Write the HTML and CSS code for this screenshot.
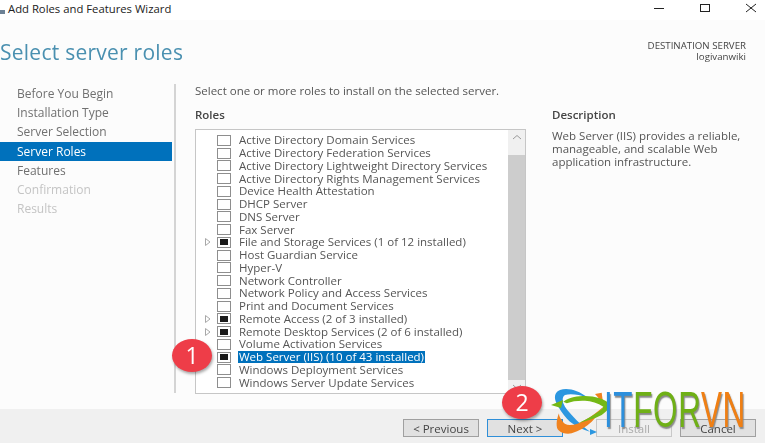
FILE: index.html
```html
<!DOCTYPE html>
<html lang="en">
<head>
    <meta charset="UTF-8">
    <title>Add Roles and Features Wizard</title>
    <link rel="stylesheet" href="styles.css">
</head>
<body>
    <div class="window">
        <div class="titlebar">
            <svg class="app-icon" width="6" height="6" viewBox="0 0 6 6"><rect y="1" width="5" height="4" fill="#6d8296"/></svg>
            <span class="app-name">Add Roles and Features Wizard</span>
            <div class="win-btns">
                <svg width="12" height="16" viewBox="0 0 12 16"><path d="M1 8.500H11" stroke="#222" fill="none"/></svg>
                <svg width="12" height="16" viewBox="0 0 12 16"><rect x="1.500" y="4.500" width="9" height="7" stroke="#222" fill="none"/></svg>
                <svg width="12" height="16" viewBox="0 0 12 16"><path d="M1 4L11 12M11 4L1 12" stroke="#222" fill="none"/></svg>
            </div>
        </div>

        <div class="header">
            <h1 class="page-title">Select server roles</h1>
            <div class="dest">DESTINATION SERVER<br>logivanwiki</div>
        </div>

        <div class="main">
            <ul class="steps">
                <li>Before You Begin</li>
                <li>Installation Type</li>
                <li>Server Selection</li>
                <li class="active">Server Roles</li>
                <li>Features</li>
                <li class="off">Confirmation</li>
                <li class="off">Results</li>
            </ul>

            <div class="content">
                <p class="intro">Select one or more roles to install on the selected server.</p>
                <div class="columns">
                    <div class="roles">
                        <h2 class="label">Roles</h2>
                        <div class="listbox">
                            <ul class="role-list">
                                <li><i class="arrow"></i><i class="check"></i><span>Active Directory Domain Services</span></li>
                                <li><i class="arrow"></i><i class="check"></i><span>Active Directory Federation Services</span></li>
                                <li><i class="arrow"></i><i class="check"></i><span>Active Directory Lightweight Directory Services</span></li>
                                <li><i class="arrow"></i><i class="check"></i><span>Active Directory Rights Management Services</span></li>
                                <li><i class="arrow"></i><i class="check"></i><span>Device Health Attestation</span></li>
                                <li><i class="arrow"></i><i class="check"></i><span>DHCP Server</span></li>
                                <li><i class="arrow"></i><i class="check"></i><span>DNS Server</span></li>
                                <li><i class="arrow"></i><i class="check"></i><span>Fax Server</span></li>
                                <li><i class="arrow"><svg width="6" height="8" viewBox="0 0 6 8"><path d="M0.500 0.500L5 4L0.500 7.500Z" stroke="#a8a8a8" fill="#fff"/></svg></i><i class="check part"></i><span>File and Storage Services (1 of 12 installed)</span></li>
                                <li><i class="arrow"></i><i class="check"></i><span>Host Guardian Service</span></li>
                                <li><i class="arrow"></i><i class="check"></i><span>Hyper-V</span></li>
                                <li><i class="arrow"></i><i class="check"></i><span>Network Controller</span></li>
                                <li><i class="arrow"></i><i class="check"></i><span>Network Policy and Access Services</span></li>
                                <li><i class="arrow"></i><i class="check"></i><span>Print and Document Services</span></li>
                                <li><i class="arrow"><svg width="6" height="8" viewBox="0 0 6 8"><path d="M0.500 0.500L5 4L0.500 7.500Z" stroke="#a8a8a8" fill="#fff"/></svg></i><i class="check part"></i><span>Remote Access (2 of 3 installed)</span></li>
                                <li><i class="arrow"><svg width="6" height="8" viewBox="0 0 6 8"><path d="M0.500 0.500L5 4L0.500 7.500Z" stroke="#a8a8a8" fill="#fff"/></svg></i><i class="check part"></i><span>Remote Desktop Services (2 of 6 installed)</span></li>
                                <li><i class="arrow"></i><i class="check"></i><span>Volume Activation Services</span></li>
                                <li><i class="arrow"></i><i class="check part"></i><span class="selected">Web Server (IIS) (10 of 43 installed)</span></li>
                                <li><i class="arrow"></i><i class="check"></i><span>Windows Deployment Services</span></li>
                                <li><i class="arrow"></i><i class="check"></i><span>Windows Server Update Services</span></li>
                            </ul>
                            <div class="scrollbar">
                                <div class="scroll-up"><svg width="10" height="6" viewBox="0 0 10 6"><path d="M1 5L5 1.500L9 5" stroke="#9a9a9a" fill="none"/></svg></div>
                                <div class="scroll-thumb"></div>
                                <div class="scroll-down"><svg width="10" height="6" viewBox="0 0 10 6"><path d="M1 1L5 4.500L9 1" stroke="#9a9a9a" fill="none"/></svg></div>
                            </div>
                        </div>
                    </div>
                    <div class="desc">
                        <h2 class="label">Description</h2>
                        <p>Web Server (IIS) provides a reliable, manageable, and scalable Web application infrastructure.</p>
                    </div>
                </div>
            </div>
        </div>

        <div class="footer">
            <button class="btn">&lt; Previous</button>
            <button class="btn primary">Next &gt;</button>
            <button class="btn install" disabled>Install</button>
            <button class="btn">Cancel</button>
        </div>
    </div>

    <!-- callouts and watermark sit on top of the dialog -->
    <div class="badge badge-one">1</div>
    <div class="badge badge-two">2</div>
    <div class="logo">
        <svg class="logo-mark" width="72" height="50" viewBox="0 0 72 50">
            <path d="M35.700 8.700C28 3 17 -1 9 2C2 5 3 12 7.300 18.700C11 25 15 30 19 33.700C25 38 32 42 39 43.700C33 39 27 34 22.300 28.700C18 24 14 20 12.300 15.300C11 11 12 8 14 7C20 5 28 7 35.700 8.700Z" fill="#2c97e0"/>
            <path d="M39 41L46 44L39 47Z" fill="#2c97e0"/>
            <path d="M8 25.300C5 32 5 40 7.300 42C11 46 17 46 20.700 45.300C28 43 35 39 40.700 33.700C45 29 49 24 52.300 18.700C46 24 40 29 34 32C29 35 24 37 19 37C15 37 12 35 10.700 32C9 30 8 28 8 25.300Z" fill="#f0821e"/>
            <path d="M44 6L50.700 4.700L52.300 17C50 13 47 9 44 6Z" fill="#f0821e"/>
            <path d="M12.300 13.700C19 9 27 8 34 8C44 8 54 11 59 16C59 20 55 24 50.700 27C43 31 35 33 27.300 35.300C34 32 41 28 47.300 23.700C50 22 52 20 52.300 18.700C47 15 40 13 34 12.700C27 12.500 21 13 15.700 15.300Z" fill="#74b816"/>
            <path d="M0 17L12 12L10 20Z" fill="#74b816"/>
        </svg>
        <span class="logo-text"><span class="c-it">IT</span><span class="c-for">FOR</span><span class="c-vn">VN</span></span>
    </div>
</body>
</html>
```

FILE: styles.css
```css
html, body {
    margin: 0;
    padding: 0;
}

body {
    width: 765px;
    height: 443px;
    overflow: hidden;
    position: relative;
    font-family: "Open Sans", "Liberation Sans", sans-serif;
    font-size: 11.500px;
    color: #555;
    background-color: #fcfcfc;
}

.window {
    display: flex;
    flex-direction: column;
    height: 443px;
    filter: blur(0.4px);
}

/* title bar */
.titlebar {
    display: flex;
    align-items: center;
    height: 20px;
    background-color: #fff;
    color: #222;
    font-size: 11.300px;
    flex: none;
}

.app-icon {
    margin-right: 2px;
    margin-top: 3px;
}

.app-name {
    margin-bottom: 4px;
}

.win-btns {
    margin-left: auto;
    display: flex;
    gap: 34px;
    padding-right: 8px;
    margin-bottom: 4px;
}

/* header */
.header {
    display: flex;
    justify-content: space-between;
    height: 64px;
    flex: none;
}

.page-title {
    margin: 19px 0 0 0;
    font-size: 21px;
    font-weight: 400;
    line-height: 26px;
    color: #4a90b0;
    letter-spacing: 0.25px;
}

.dest {
    margin: 20px 19px 0 0;
    text-align: right;
    font-size: 9.700px;
    line-height: 11px;
    color: #444;
}

/* main area */
.main {
    display: flex;
    flex: 1;
    min-height: 0;
}

.steps {
    list-style: none;
    margin: 0 2px 0 0;
    padding: 0;
    width: 172px;
    height: 309px;
    flex: none;
}

.steps li {
    height: 19.200px;
    line-height: 20px;
    padding-left: 17px;
    color: #707070;
    font-size: 12px;
}

.steps .active {
    background-color: #0071bc;
    color: #fff;
}

.steps .off {
    color: #c4c4c4;
}

.content {
    flex: 1;
    padding-left: 19px;
    border-left: 2px solid #d4d4d4;
    height: 309px;
    box-sizing: border-box;
}

.intro {
    margin: 0;
    line-height: 13px;
    white-space: nowrap;
    color: #555;
}

.columns {
    display: flex;
    margin-top: 11px;
}

.roles {
    width: 331px;
    flex: none;
}

.label {
    margin: 0 0 8px 0;
    font-size: 11.500px;
    line-height: 13px;
    font-weight: 600;
    color: #444;
}

.listbox {
    display: flex;
    width: 331px;
    height: 265px;
    box-sizing: border-box;
    border: 1px solid #c6c6c6;
    background-color: #fff;
}

.role-list {
    list-style: none;
    margin: 0;
    padding: 4px 0 0 0;
    flex: 1;
    min-width: 0;
}

.role-list li {
    display: flex;
    align-items: center;
    height: 12.750px;
    line-height: 12px;
    white-space: nowrap;
    color: #555;
    font-size: 11.500px;
}

.arrow {
    display: flex;
    align-items: center;
    width: 6px;
    height: 8px;
    margin-left: 9px;
    margin-right: 6px;
    flex: none;
}

.check {
    width: 14px;
    height: 11px;
    box-sizing: border-box;
    border: 1px solid #8e8e8e;
    background-color: #fff;
    margin-right: 7px;
    display: flex;
    align-items: center;
    justify-content: center;
    flex: none;
}

.check.part::before {
    content: "";
    width: 8px;
    height: 6px;
    background-color: #1a1a1a;
}

.role-list span {
    padding: 0 1px;
}

.role-list .selected {
    background-color: #0071bc;
    color: #fff;
}

.scrollbar {
    width: 17px;
    flex: none;
    display: flex;
    flex-direction: column;
    background-color: #f0f0f0;
}

.scroll-up {
    height: 25px;
    display: flex;
    justify-content: center;
    padding-top: 4px;
    box-sizing: border-box;
    flex: none;
}

.scroll-down {
    height: 13px;
    display: flex;
    align-items: center;
    justify-content: center;
    flex: none;
}

.scroll-thumb {
    flex: 1;
    background-color: #cdcdcd;
}

.desc {
    margin-left: 26px;
    width: 195px;
}

.desc .label {
    margin-bottom: 8px;
}

.desc p {
    margin: 0;
    line-height: 13px;
    color: #555;
}

/* footer */
.footer {
    display: flex;
    justify-content: flex-end;
    align-items: center;
    gap: 8px;
    height: 34px;
    margin-top: auto;
    padding: 4px 9px 0 0;
    box-sizing: border-box;
    background-color: #f0f0f0;
    flex: none;
}

.btn {
    width: 76px;
    height: 18px;
    padding: 0;
    font-family: inherit;
    font-size: 11.500px;
    color: #444;
    background-color: #e1e1e1;
    border: 1px solid #a0a0a0;
}

.btn.primary {
    border-color: #2f8fd8;
}

.btn.install {
    margin-left: 25px;
}

.btn:disabled {
    color: #aaa;
    background-color: #efefef;
    border-color: #c8c8c8;
}

/* overlays */
.badge {
    position: absolute;
    width: 40px;
    height: 33px;
    border-radius: 50%;
    background-color: #ee3d48;
    color: #fff;
    font-size: 23px;
    line-height: 33px;
    text-align: center;
    box-shadow: 1px 2px 3px rgba(0, 0, 0, 0.35);
}

.badge-one {
    left: 172px;
    top: 339px;
}

.badge-two {
    left: 502px;
    top: 386px;
}

.logo {
    position: absolute;
    left: 551px;
    top: 388px;
    width: 214px;
    height: 55px;
}

.logo-mark {
    position: absolute;
    left: 0;
    top: 0;
}

.logo-text {
    position: absolute;
    left: 53px;
    top: -4px;
    font-family: "Liberation Sans", sans-serif;
    font-size: 31.500px;
    line-height: 32px;
    letter-spacing: 0.6px;
    white-space: nowrap;
    transform: scaleY(1.6);
    transform-origin: left top;
    text-shadow: 1px 1px 1px #888;
}

.c-it {
    color: #2c8fdc;
}

.c-for {
    color: #6fb016;
}

.c-vn {
    color: #f07f13;
}
```
